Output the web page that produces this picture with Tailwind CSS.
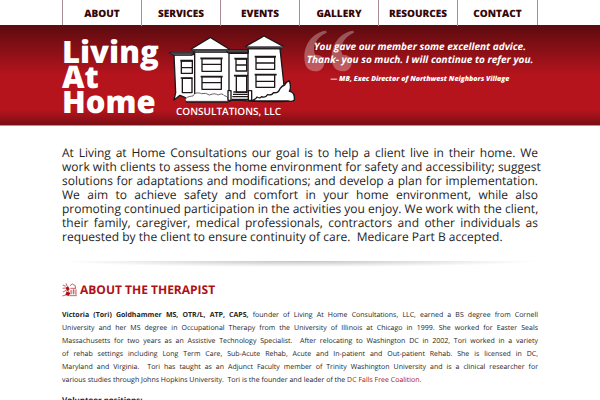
<!DOCTYPE html>
<html lang="en">
<head>
<meta charset="utf-8">
<title>Living At Home Consultations</title>
<script src="https://cdn.jsdelivr.net/npm/@tailwindcss/browser@4"></script>
</head>
<body class="bg-white overflow-x-hidden font-['Open_Sans',sans-serif] text-[#242424] [text-rendering:geometricPrecision]">
<nav class="mx-auto grid h-[25px] w-full max-w-[476px] grid-cols-6 divide-x divide-[#a98c91] border-x border-[#a98c91] text-center text-[10px] leading-[26px] font-extrabold text-[#350708]">
  <a href="#about">ABOUT</a>
  <a href="#services">SERVICES</a>
  <a href="#events">EVENTS</a>
  <a href="#gallery">GALLERY</a>
  <a href="#resources">RESOURCES</a>
  <a href="#contact">CONTACT</a>
</nav>
<header class="border-b border-[#c58b8e] bg-[linear-gradient(#5c0b0f,#b5141d_50%,#b5141d_85%,#790e14)] text-white">
  <div class="mx-auto flex h-[100px] w-full max-w-[476px]">
    <h1 class="w-[106px] shrink-0 pt-[15px] text-[31px] leading-[25px] font-extrabold">Living<br>At<br>Home</h1>
    <div class="w-[130px] shrink-0 pt-[9px]">
      <svg class="block h-[70px] w-[130px]" viewBox="24 12 390 210" preserveAspectRatio="none" fill="#fff" stroke="#1d1719" stroke-width="4" stroke-linejoin="round" aria-hidden="true">
        <path d="M42 74H100L103 65H208V70H264V56H360L372 166Q382 153 388 153Q393 178 387 185Q408 190 402 211Q388 217 276 214L248 211H214L204 216H80L76 203L60 196L42 210L47 188Z"/>
        <path d="M29 68H96V75H40ZM200 60H264V68H203ZM94 57 151 22 207 57 199 66H104ZM257 49 312 18 370 49 364 56H268Z"/>
        <path d="M32 70H98M203 64H263M98 60H204M260 52H370" stroke="#454047" stroke-width="6"/>
        <path d="M104 68V193M207 69V185M264 57V184" fill="none"/>
        <path d="M64 93H97V130H64ZM64 113H97M126 86H184V124H126ZM126 103H184M126 140H184V178H126ZM126 158H184M228 87H260V123H228ZM228 105H260M288 81H344V118H288ZM288 99H344M288 134H344V172H288ZM288 154H344M67 145H96V188H67ZM229 138H260V187H229Z"/>
        <path d="M61 92H99M121 85H188M122 140H188M223 86H263M284 80H348M284 134H350M62 144H98M222 137H264" fill="none" stroke-width="5"/>
        <path d="M78 214C70 204 86 199 99 198C103 186 118 188 124 191Q138 187 148 195Q165 188 174 195Q187 188 193 197Q206 199 205 214Z" stroke-width="2"/>
        <path d="M276 212Q288 207 291 201Q302 207 304 200Q317 205 322 194Q337 196 340 188Q355 190 360 176Q366 167 374 165Q382 151 389 155Q394 176 388 184Q405 186 403 210Q396 216 384 213Z"/>
        <path d="M204 182H213V211H204ZM265 182H275V211H265Z"/>
        <path d="M220 186H263M219 193H263M217 200H264M215 208H266" fill="none" stroke-width="4"/>
      </svg>
      <p class="pl-[8px] text-[10px] leading-[14px] font-semibold whitespace-nowrap">CONSULTATIONS, LLC</p>
    </div>
    <blockquote class="relative min-w-0 grow pt-[15px] pl-[4px] text-center font-bold italic">
      <svg class="absolute top-[5px] left-[6px] h-[42px] w-[50px]" viewBox="0 0 150 126" fill="#fff" fill-opacity=".3" aria-hidden="true">
        <path d="M66 2C40 4 1 29 1 82C1 110 13 124 34 124C50 124 61 112 61 98C61 81 49 73 33 74C23 46 38 21 68 8Z"/>
        <path d="M148 2C122 4 83 29 83 82C83 110 95 124 116 124C132 124 143 112 143 98C143 81 131 73 115 74C105 46 120 21 150 8Z"/>
      </svg>
      <p class="relative text-[10px] leading-[13px] whitespace-nowrap">You gave our member some excellent advice.<br>Thank- you so much. I will continue to refer you.</p>
      <footer class="relative pt-[8px] text-[7px] leading-[12px] font-extrabold whitespace-nowrap">— MB, Exec Director of Northwest Neighbors Village</footer>
    </blockquote>
  </div>
</header>
<main class="mx-auto w-full max-w-[476px]">
  <p class="pt-[20px] text-[12px] leading-[14px] whitespace-nowrap">
    <span class="block [text-align-last:justify]">At Living at Home Consultations our goal is to help a client live in their home. We</span>
    <span class="block [text-align-last:justify]">work with clients to assess the home environment for safety and accessibility; suggest</span>
    <span class="block [text-align-last:justify]">solutions for adaptations and modifications; and develop a plan for implementation.</span>
    <span class="block [text-align-last:justify]">We aim to achieve safety and comfort in your home environment, while also</span>
    <span class="block [text-align-last:justify]">promoting continued participation in the activities you enjoy. We work with the client,</span>
    <span class="block [text-align-last:justify]">their family, caregiver, medical professionals, contractors and other individuals as</span>
    <span class="block">requested by the client to ensure continuity of care.&nbsp; Medicare Part B accepted.</span>
  </p>
  <div class="mt-[17px] h-[6px] bg-[radial-gradient(ellipse_50%_100%_at_50%_0%,#c4c4c4,transparent)]"></div>
  <section id="about">
    <h2 class="mt-[14px] flex items-center gap-[3px] text-[12px] leading-[18px] font-bold text-[#ae1018]">
      <svg class="h-[14px] w-[15px]" viewBox="0 0 45 42" fill="none" stroke="#ae1018" stroke-width="3" aria-hidden="true">
        <path d="M2 6 12 10M12 1 15 9M2 16 10 15M3 27 16 20 22 29 11 36 1 39M24 8 31 3 40 8V16M25 16H42M27 21V34M35 18V34M42 19V37M22 38H44" stroke-opacity=".65"/>
        <path d="M10 15 18 9 23 19 17 24ZM14 25 25 31 20 39 10 36Z" fill="#ae1018" stroke="none"/>
        <path d="M26 24H42M26 30H42" stroke-width="2" stroke-opacity=".5"/>
      </svg>
      ABOUT THE THERAPIST
    </h2>
    <p class="pt-[10px] text-[7px] leading-[13px] whitespace-nowrap">
      <span class="block [text-align-last:justify]"><strong>Victoria (Tori) Goldhammer MS, OTR/L, ATP, CAPS,</strong> founder of Living At Home Consultations, LLC, earned a BS degree from Cornell</span>
      <span class="block [text-align-last:justify]">University and her MS degree in Occupational Therapy from the University of Illinois at Chicago in 1999. She worked for Easter Seals</span>
      <span class="block [text-align-last:justify]">Massachusetts for two years as an Assistive Technology Specialist.&nbsp; After relocating to Washington DC in 2002, Tori worked in a variety</span>
      <span class="block [text-align-last:justify]">of rehab settings including Long Term Care, Sub-Acute Rehab, Acute and In-patient and Out-patient Rehab. She is licensed in DC,</span>
      <span class="block [text-align-last:justify]">Maryland and Virginia.&nbsp; Tori has taught as an Adjunct Faculty member of Trinity Washington University and is a clinical researcher for</span>
      <span class="block">various studies through Johns Hopkins University.&nbsp; Tori is the founder and leader of the <a href="#coalition" class="text-[#ae1018]">DC Falls Free Coalition.</a></span>
    </p>
    <h3 class="pt-[7px] text-[8px] leading-[13px] font-bold">Volunteer positions:</h3>
  </section>
</main>
</body>
</html>
